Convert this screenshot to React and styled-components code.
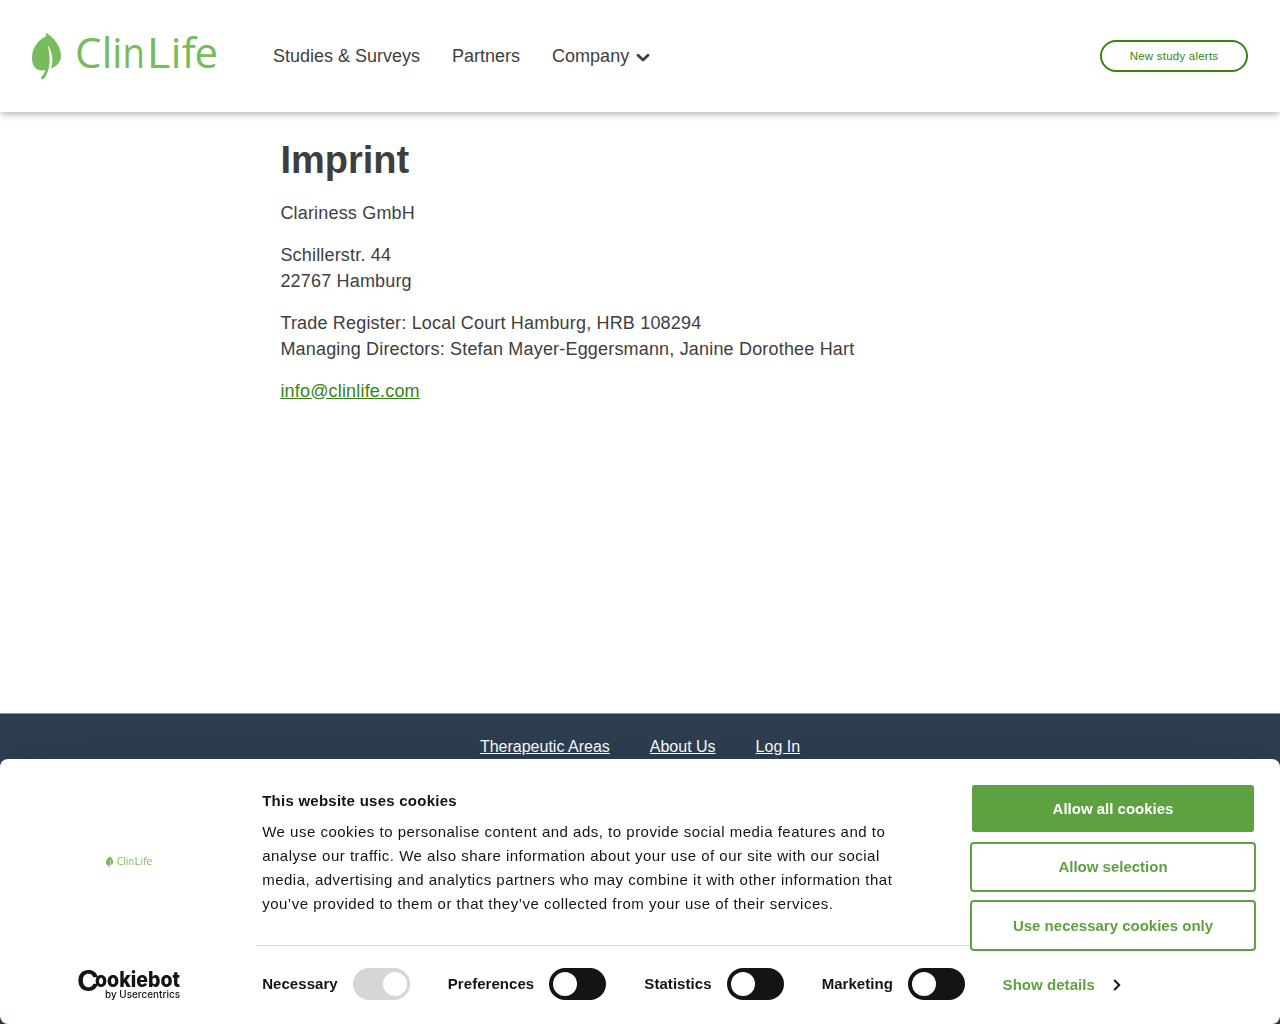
import React from "react";
import styled, { createGlobalStyle } from "styled-components";

const GlobalStyle = createGlobalStyle`
  * { box-sizing: border-box; }
  html, body { margin: 0; height: 1024px; overflow: hidden; background: #fff; }
  body { font-family: "Liberation Sans", Arial, sans-serif; color: #3e3e3e; font-size: 18px; }
  a { color: inherit; }
`;

const Page = styled.div`
  height: 1024px;
  display: flex;
  flex-direction: column;
  overflow: hidden;
`;

const Header = styled.header`
  flex: 0 0 112px;
  display: flex;
  align-items: center;
  padding: 0 32px;
  background: #fff;
  box-shadow: 0 2px 7px rgba(0, 0, 0, 0.3);
`;

const LogoSvg = styled.svg`
  display: block;
  flex: none;
  overflow: visible;
  width: ${(p) => p.$width}px;
  height: ${(p) => p.$width * 0.25946}px;
`;

const LogoText = styled.text`
  font-family: "Open Sans", "Noto Sans", sans-serif;
  font-size: 42px;
  font-weight: 400;
`;

const Nav = styled.nav`
  display: flex;
  gap: 32px;
  margin-left: 56px;
  flex: 1;
`;

const NavLink = styled.a`
  display: flex;
  align-items: center;
  gap: 7px;
  line-height: 26px;
  text-decoration: none;
`;

const Chevron = styled.svg`
  margin-top: 3px;
`;

const AlertButton = styled.button`
  width: 148px;
  height: 32px;
  padding: 0;
  border: 2px solid #36850f;
  border-radius: 16px;
  background: #fff;
  color: #36850f;
  font: 11.5px "Liberation Sans", Arial, sans-serif;
  letter-spacing: 0.23px;
`;

const Main = styled.main`
  flex: 0 0 601px;
  width: 720px;
  margin-left: 280.4px;
  padding-top: 22px;
`;

const Title = styled.h1`
  margin: 0 0 13.5px;
  font-size: 38px;
  line-height: 52px;
`;

const Paragraph = styled.p`
  margin: 0 0 16px;
  line-height: 26px;
  letter-spacing: 0.01em;
`;

const MailLink = styled.a`
  color: #36850f;
`;

const Footer = styled.footer`
  flex: 1;
  display: flex;
  justify-content: center;
  gap: 40px;
  padding-top: 22px;
  border-top: 1px solid #8b949e;
  background: #2c3e50;
  color: #fff;
  font-size: 16px;
  line-height: 22px;
`;

const Dialog = styled.section`
  position: fixed;
  left: 0;
  right: 0;
  bottom: 0;
  height: 264.6px;
  display: flex;
  padding-right: 24px;
  border-radius: 8px;
  background: #fff;
  color: #141414;
  font-size: 15px;
  box-shadow: 0 32px 68px rgba(0, 0, 0, 0.3);
`;

const Brand = styled.div`
  flex: 0 0 256px;
  display: flex;
  flex-direction: column;
  align-items: center;
  padding: 96.6px 0 0 2px;
`;

const CookiebotSvg = styled.svg`
  display: block;
  overflow: visible;
  width: 104px;
  height: 34px;
  margin-top: 101px;
`;

const Center = styled.div`
  flex: 0 0 714px;
`;

const Message = styled.div`
  height: 186.6px;
  padding: 29.9px 60px 0 6.2px;
  border-bottom: 1px solid #d6d6d6;
`;

const MessageTitle = styled.h2`
  margin: 0 0 7px;
  font-size: 15px;
  line-height: 24px;
  letter-spacing: 0.25px;
`;

const MessageText = styled.p`
  margin: 0;
  line-height: 24px;
  letter-spacing: 0.5px;
  white-space: nowrap;
`;

const Switches = styled.div`
  display: flex;
  justify-content: space-between;
  padding: 22px 5px 0 6.2px;
`;

const SwitchLabel = styled.label`
  display: flex;
  align-items: center;
  gap: 15px;
  font-weight: 700;
  letter-spacing: 0.05px;
`;

const SwitchName = styled.span`
  padding-bottom: 1.4px;
`;

const Track = styled.span`
  display: flex;
  align-items: center;
  justify-content: ${(p) => (p.$on ? "flex-end" : "flex-start")};
  width: 57px;
  height: 32px;
  padding: ${(p) => (p.$on ? "0 3px" : "0 4px")};
  border-radius: 16px;
  background: ${(p) => (p.$on ? "#d6d6d6" : "#141414")};
`;

const Knob = styled.span`
  width: 24px;
  height: 24px;
  border-radius: 50%;
  background: #fff;
`;

const Actions = styled.div`
  flex: 1;
  display: flex;
  flex-direction: column;
  gap: 7.8px;
  padding-top: 24px;
`;

const Action = styled.button`
  flex: none;
  height: 50.6px;
  padding: 0 0 0.4px;
  border: 2px solid ${(p) => (p.$filled ? "#fff" : "#5ea140")};
  border-radius: 4px;
  background: ${(p) => (p.$filled ? "#5ea140" : "#fff")};
  background-clip: padding-box;
  color: ${(p) => (p.$filled ? "#fff" : "#5ea140")};
  font: 700 15px "Liberation Sans", Arial, sans-serif;
`;

const Details = styled.a`
  display: flex;
  align-items: center;
  gap: 18px;
  margin: 14.6px 0 0 32.6px;
  line-height: 24px;
  font-weight: 700;
  letter-spacing: 0.05px;
  color: #5ea140;
  text-decoration: none;
`;

function Logo({ width }) {
  return (
    <LogoSvg $width={width} viewBox="0 0 185 48" role="img" aria-label="ClinLife">
      <path
        fill="#76bc5a"
        d="M13.7 0.8C22 5 29 15 29 24C29 30 24 35 19 36.500C22 29 20 19 15.500 12.500C18 22 18.500 32 16 39C14.500 42.500 13.500 44.500 12.200 46.500C11.300 47.800 8 47 9.200 45C11 43 12.800 41 13.200 38C5 40 0 35 0 26C0 16 6 8 14.300 4.300Z"
      />
      <LogoText y="36.200" fill="#76bc5a">
        <tspan x="43 69.700 79.900">Cli</tspan>
        <tspan x="90.600" textLength="22.500" lengthAdjust="spacingAndGlyphs">n</tspan>
        <tspan x="114.800" textLength="23.500" lengthAdjust="spacingAndGlyphs">L</tspan>
        <tspan x="138.700 149.800 162.500">ife</tspan>
      </LogoText>
    </LogoSvg>
  );
}

function CookiebotLogo() {
  return (
    <CookiebotSvg viewBox="0 0 104 34" fill="#141414" fontFamily="Inter, sans-serif">
      <text>
        <tspan x="0" y="22.200" fontSize="28" fontWeight="700" textLength="22" lengthAdjust="spacingAndGlyphs">C</tspan>
        <tspan x="18" y="18" fontSize="21" fontWeight="800" textLength="85" lengthAdjust="spacingAndGlyphs">ookiebot</tspan>
      </text>
      <text x="28" y="29.300" fontSize="10" fontWeight="500" textLength="75" lengthAdjust="spacingAndGlyphs">by Usercentrics</text>
    </CookiebotSvg>
  );
}

const SWITCHES = [
  ["Necessary", true],
  ["Preferences", false],
  ["Statistics", false],
  ["Marketing", false],
];

export default function App() {
  return (
    <>
      <GlobalStyle />
      <Page>
        <Header>
          <Logo width={185} />
          <Nav>
            <NavLink>Studies &amp; Surveys</NavLink>
            <NavLink>Partners</NavLink>
            <NavLink>
              Company
              <Chevron width="14" height="10" viewBox="0 0 14 10" fill="none" stroke="#3e3e3e" strokeWidth="2.800">
                <path d="M2 2.200L7 7L12 2.200" strokeLinejoin="round" strokeLinecap="round" />
              </Chevron>
            </NavLink>
          </Nav>
          <AlertButton>New study alerts</AlertButton>
        </Header>
        <Main>
          <Title>Imprint</Title>
          <Paragraph>Clariness GmbH</Paragraph>
          <Paragraph>
            Schillerstr. 44<br />22767 Hamburg
          </Paragraph>
          <Paragraph>
            Trade Register: Local Court Hamburg, HRB 108294<br />
            Managing Directors: Stefan Mayer-Eggersmann, Janine Dorothee Hart
          </Paragraph>
          <Paragraph>
            <MailLink href="#mail">info@clinlife.com</MailLink>
          </Paragraph>
        </Main>
        <Footer>
          <a href="#areas">Therapeutic Areas</a>
          <a href="#about">About Us</a>
          <a href="#login">Log In</a>
        </Footer>
      </Page>
      <Dialog>
        <Brand>
          <Logo width={46} />
          <CookiebotLogo />
        </Brand>
        <Center>
          <Message>
            <MessageTitle>This website uses cookies</MessageTitle>
            <MessageText>
              We use cookies to personalise content and ads, to provide social media features and to<br />
              analyse our traffic. We also share information about your use of our site with our social<br />
              media, advertising and analytics partners who may combine it with other information that<br />
              you’ve provided to them or that they’ve collected from your use of their services.
            </MessageText>
          </Message>
          <Switches>
            {SWITCHES.map(([name, on]) => (
              <SwitchLabel key={name}>
                <SwitchName>{name}</SwitchName>
                <Track $on={on}><Knob /></Track>
              </SwitchLabel>
            ))}
          </Switches>
        </Center>
        <Actions>
          <Action $filled>Allow all cookies</Action>
          <Action>Allow selection</Action>
          <Action>Use necessary cookies only</Action>
          <Details>
            Show details
            <svg width="8" height="12" viewBox="0 0 8 12" fill="none" stroke="#141414" strokeWidth="2">
              <path d="M1.200 1L6.200 6L1.200 11" />
            </svg>
          </Details>
        </Actions>
      </Dialog>
    </>
  );
}
